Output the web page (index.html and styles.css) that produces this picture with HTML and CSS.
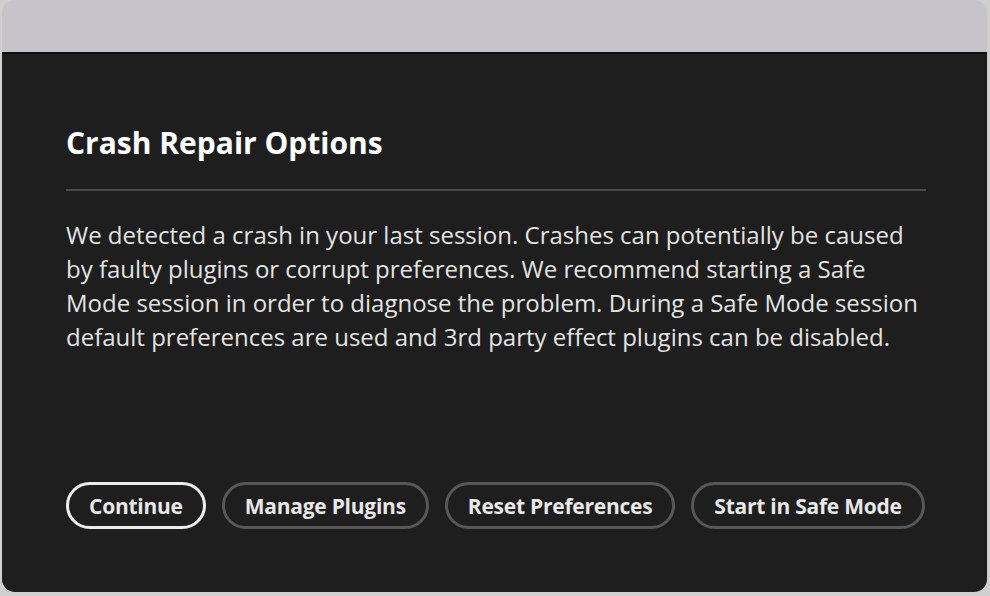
FILE: index.html
```html
<!DOCTYPE html>
<html>
<head>
<meta charset="utf-8">
<link rel="stylesheet" href="styles.css">
</head>
<body>
<div class="window">
  <div class="titlebar"></div>
  <div class="dialog">
    <h1 class="title">Crash Repair Options</h1>
    <div class="rule"></div>
    <p class="message">We detected a crash in your last session. Crashes can potentially be caused by faulty plugins or corrupt preferences. We recommend starting a Safe Mode session in order to diagnose the problem. During a Safe Mode session default preferences are used and 3rd party effect plugins can be disabled.</p>
    <div class="actions">
      <button class="btn btn-primary">Continue</button>
      <button class="btn">Manage Plugins</button>
      <button class="btn">Reset Preferences</button>
      <button class="btn">Start in Safe Mode</button>
    </div>
  </div>
</div>
</body>
</html>
```
FILE: styles.css
```css
html, body {
  margin: 0;
  padding: 0;
}
body {
  width: 990px;
  height: 596px;
  background: #cfcfcf;
  font-family: "Open Sans", "Liberation Sans", sans-serif;
  overflow: hidden;
}
.window {
  margin-left: 2px;
  width: 985px;
  height: 592px;
  border-radius: 13px;
  overflow: hidden;
  display: flex;
  flex-direction: column;
}
.titlebar {
  height: 52px;
  background: #c6c4ca;
  border-bottom: 2px solid #0e0e0e;
  flex: none;
}
.dialog {
  flex: 1;
  background: #1e1e1e;
  padding: 70px 61px 63px 64px;
  display: flex;
  flex-direction: column;
}
.title {
  margin: 0;
  font-size: 30px;
  line-height: 38px;
  font-weight: 700;
  color: #ffffff;
  letter-spacing: 0;
}
.rule {
  height: 2px;
  background: #4a4a4a;
  margin-top: 27px;
}
.message {
  margin: 27px 0 0 0;
  font-size: 24px;
  line-height: 34px;
  color: #e3e3e3;
  letter-spacing: 0;
}
.actions {
  margin-top: auto;
  display: flex;
  gap: 16px;
}
.btn {
  height: 47px;
  padding: 0 20px;
  border-radius: 24px;
  border: 3px solid #575757;
  background: transparent;
  color: #e8e8e8;
  font-family: inherit;
  font-size: 21px;
  font-weight: 700;
  letter-spacing: -0.25px;
  flex: none;
}
.btn-primary {
  border-color: #ececec;
}
```
